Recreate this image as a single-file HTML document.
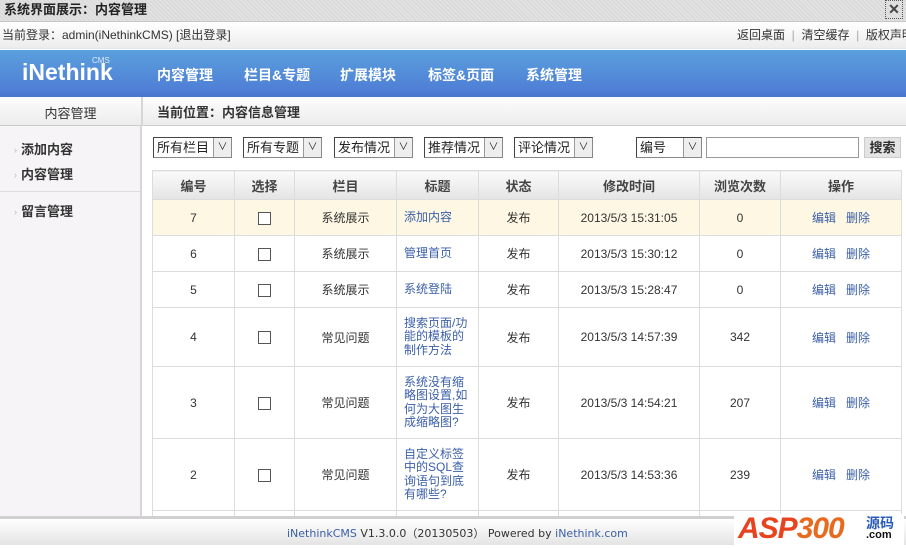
<!DOCTYPE html>
<html><head><meta charset="utf-8"><style>
*{margin:0;padding:0;box-sizing:border-box}
body{width:906px;height:545px;overflow:hidden;background:#fff;font-family:"Liberation Sans","Noto Sans CJK SC",sans-serif;font-size:12px;color:#333;position:relative}
.abs{position:absolute}
#title{left:0;top:0;width:906px;height:22px;background:repeating-linear-gradient(45deg,#d6d6d6 0 1px,#e2e2e2 1px 3px);font-weight:bold;font-size:13px;color:#222;line-height:19px;padding-left:4px;border-bottom:1px solid #c8c8c8}
#close{right:3px;top:0;width:18px;height:19px;border:1px dotted #555;font-size:14px;font-weight:bold;line-height:17px;text-align:center;color:#444}
#login{left:0;top:23px;width:906px;height:26px;background:linear-gradient(#fff,#ececec);line-height:25px;font-size:12px;color:#333;border-bottom:1px solid #e0e6f0}
#nav{left:0;top:50px;width:906px;height:47px;background:linear-gradient(#5aa0dc,#4f7fd6 85%,#4a73cf)}
#nav .logo{left:22px;top:9px;color:#fff;font-size:23px;font-weight:bold;letter-spacing:0}
#nav .cms{left:92px;top:6px;color:#dfe9f7;font-size:8px}
#nav .m{top:15px;color:#fff;font-weight:bold;font-size:14px}
#sub{left:0;top:97px;width:906px;height:29px;background:linear-gradient(#fdfdfd,#ececec);border-bottom:1px solid #ccc}
#side{left:0;top:126px;width:142px;height:390px;background:#f6f4f6;border-right:2px solid #d6d6d6}
.si{left:14px;font-weight:bold;font-size:13px;color:#333}
.si:before{content:"›";color:#bbb;font-weight:normal;font-size:9px;margin-right:4px;position:relative;top:-1px}
.sel{top:137px;height:21px;border:1px solid #888;border-top-color:#444;border-left-color:#444;background:#fff;font-size:13px;line-height:19px;padding-left:3px;color:#222}
.sel b{position:absolute;right:0;top:0;width:18px;height:19px;border-left:1px solid #999;background:#eee;font-weight:normal;font-size:10px;text-align:center;line-height:19px}
table{position:absolute;left:152px;top:170px;border-collapse:collapse;table-layout:fixed}
td,th{border:1px solid #dcdcdc;text-align:center;font-size:12px;color:#333;font-weight:normal}
th{height:29px;background:linear-gradient(#fafafa,#e4e4e4);font-weight:bold;color:#444;font-size:13px}
td.t{text-align:left;color:#3b5fa8;padding-left:7px;line-height:13.5px}
.cb{display:inline-block;width:13px;height:13px;border:1px solid #555;background:#fff;vertical-align:middle}
.op{color:#3b5fa8}
#foot{left:0;top:516px;width:906px;height:29px;background:linear-gradient(#fff,#e4e4e4);border-top:3px solid #d0d0d0;line-height:30px;font-size:11px;color:#333;font-family:"DejaVu Sans","Noto Sans CJK SC",sans-serif}
</style></head><body>
<div id="title" class="abs">系统界面展示：内容管理</div>
<div id="close" class="abs">✕</div>
<div id="login" class="abs"><span style="position:absolute;left:2px">当前登录：admin(iNethinkCMS) [退出登录]</span><span style="position:absolute;left:737px;white-space:nowrap">返回桌面 &nbsp;<span style="color:#aaa">|</span>&nbsp; 清空缓存 &nbsp;<span style="color:#aaa">|</span>&nbsp; 版权声明</span></div>
<div id="nav" class="abs">
<div class="abs logo">iNethink</div><div class="abs cms">CMS</div>
<div class="abs m" style="left:157px">内容管理</div>
<div class="abs m" style="left:244px">栏目&amp;专题</div>
<div class="abs m" style="left:340px">扩展模块</div>
<div class="abs m" style="left:428px">标签&amp;页面</div>
<div class="abs m" style="left:526px">系统管理</div>
</div>
<div id="sub" class="abs">
<div class="abs" style="left:0;width:141px;text-align:center;top:6px;font-size:13px;color:#333">内容管理</div>
<div class="abs" style="left:141px;top:0;width:2px;height:29px;background:#d6d6d6"></div>
<div class="abs" style="left:157px;top:5px;font-size:13px;font-weight:bold;color:#333">当前位置：内容信息管理</div>
</div>
<div id="side" class="abs">
<div class="abs si" style="top:13px">添加内容</div>
<div class="abs si" style="top:38px">内容管理</div>
<div class="abs" style="left:0;top:65px;width:140px;height:1px;background:#ddd"></div>
<div class="abs si" style="top:75px">留言管理</div>
</div>
<div class="abs sel" style="left:153px;width:79px">所有栏目<b>∨</b></div>
<div class="abs sel" style="left:243px;width:79px">所有专题<b>∨</b></div>
<div class="abs sel" style="left:334px;width:79px">发布情况<b>∨</b></div>
<div class="abs sel" style="left:424px;width:79px">推荐情况<b>∨</b></div>
<div class="abs sel" style="left:514px;width:79px">评论情况<b>∨</b></div>
<div class="abs sel" style="left:636px;width:66px">编号<b>∨</b></div>
<div class="abs" style="left:706px;top:137px;width:153px;height:21px;border:1px solid #999;background:#fff"></div>
<div class="abs" style="left:864px;top:137px;width:37px;height:21px;background:#e4e4e4;border:1px solid #ccc;font-weight:bold;font-size:13px;text-align:center;line-height:19px">搜索</div>
<table>
<colgroup><col style="width:82px"><col style="width:60px"><col style="width:102px"><col style="width:82px"><col style="width:80px"><col style="width:141px"><col style="width:81px"><col style="width:121px"></colgroup>
<tr><th>编号</th><th>选择</th><th>栏目</th><th>标题</th><th>状态</th><th>修改时间</th><th>浏览次数</th><th>操作</th></tr>
<tr style="height:36px;background:#fdf7e3"><td>7</td><td><span class="cb"></span></td><td>系统展示</td><td class="t">添加内容</td><td>发布</td><td>2013/5/3 15:31:05</td><td>0</td><td class="op">编辑&nbsp;&nbsp; 删除</td></tr>
<tr style="height:36px"><td>6</td><td><span class="cb"></span></td><td>系统展示</td><td class="t">管理首页</td><td>发布</td><td>2013/5/3 15:30:12</td><td>0</td><td class="op">编辑&nbsp;&nbsp; 删除</td></tr>
<tr style="height:36px"><td>5</td><td><span class="cb"></span></td><td>系统展示</td><td class="t">系统登陆</td><td>发布</td><td>2013/5/3 15:28:47</td><td>0</td><td class="op">编辑&nbsp;&nbsp; 删除</td></tr>
<tr style="height:59px"><td>4</td><td><span class="cb"></span></td><td>常见问题</td><td class="t">搜索页面/功<br>能的模板的<br>制作方法</td><td>发布</td><td>2013/5/3 14:57:39</td><td>342</td><td class="op">编辑&nbsp;&nbsp; 删除</td></tr>
<tr style="height:72px"><td>3</td><td><span class="cb"></span></td><td>常见问题</td><td class="t">系统没有缩<br>略图设置,如<br>何为大图生<br>成缩略图?</td><td>发布</td><td>2013/5/3 14:54:21</td><td>207</td><td class="op">编辑&nbsp;&nbsp; 删除</td></tr>
<tr style="height:72px"><td>2</td><td><span class="cb"></span></td><td>常见问题</td><td class="t">自定义标签<br>中的SQL查<br>询语句到底<br>有哪些?</td><td>发布</td><td>2013/5/3 14:53:36</td><td>239</td><td class="op">编辑&nbsp;&nbsp; 删除</td></tr>
<tr style="height:20px"><td></td><td></td><td></td><td></td><td></td><td></td><td></td><td></td></tr>
</table>
<div id="foot" class="abs"><span style="position:absolute;left:287px"><span style="color:#3b5fa8">iNethinkCMS</span> V1.3.0.0（20130503） Powered by <span style="color:#3b5fa8">iNethink.com</span></span></div>
<div class="abs" style="left:734px;top:514px;width:170px;height:31px;background:#fff"></div>
<div class="abs" style="left:738px;top:512px;font-size:30px;font-weight:bold;font-style:italic;color:#e8431f;letter-spacing:-1px;font-family:'Liberation Sans',sans-serif">ASP<span style="color:#e86a1f">300</span></div>
<div class="abs" style="left:866px;top:513px;font-size:14px;font-weight:bold;color:#2a5bb8">源码</div>
<div class="abs" style="left:866px;top:529px;font-size:11px;font-weight:bold;color:#111">.com</div>
</body></html>
